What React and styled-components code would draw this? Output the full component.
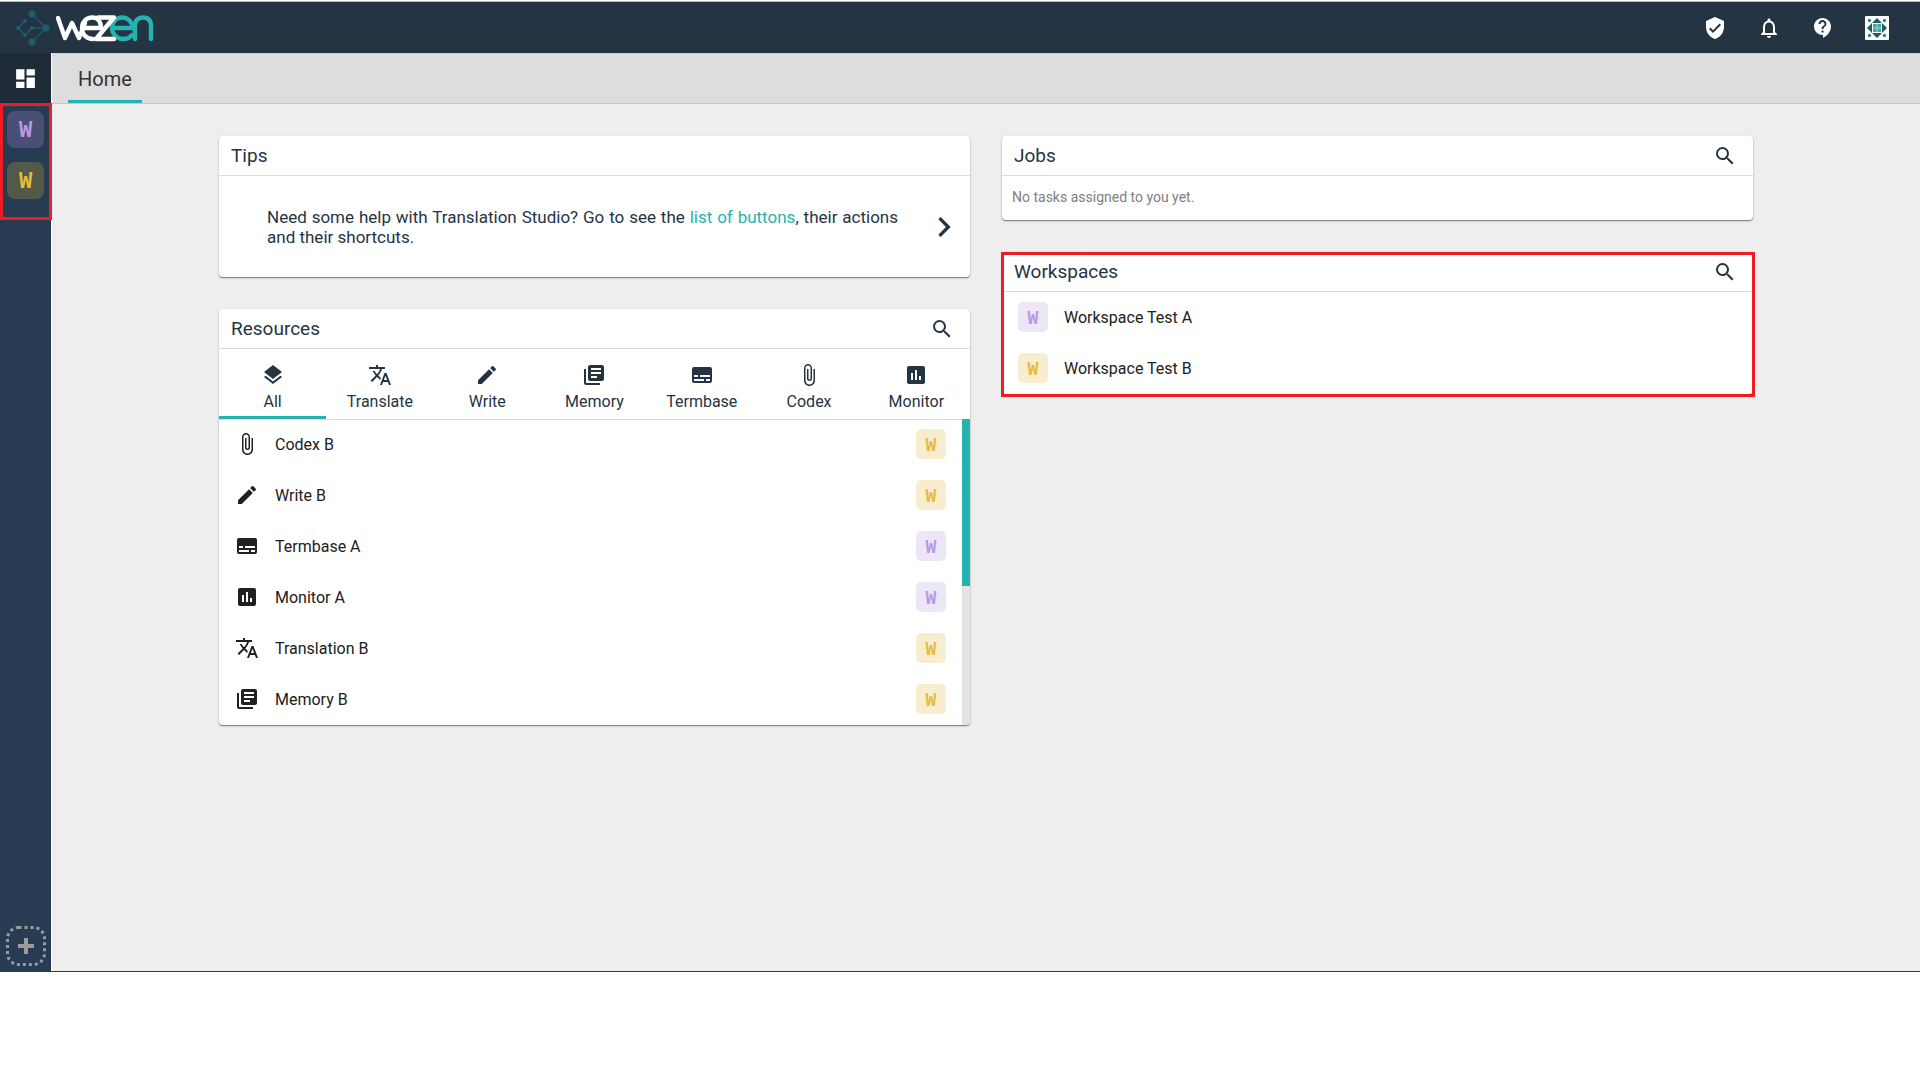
import React from 'react';
import styled, { createGlobalStyle } from 'styled-components';
import {
    MdAssessment,
    MdAttachFile,
    MdChevronRight,
    MdContactSupport,
    MdDashboard,
    MdEdit,
    MdLayers,
    MdLibraryBooks,
    MdNotificationsNone,
    MdSearch,
    MdSubtitles,
    MdTranslate,
    MdVerifiedUser
} from 'react-icons/md';

const TEAL = '#26b3b0';
const NAVY = '#253443';

const GlobalStyle = createGlobalStyle`
    * {
        box-sizing: border-box;
    }

    body {
        margin: 0;
        background: #fff;
        font-family: Roboto, 'Liberation Sans', sans-serif;
        font-size: 16px;
        color: ${NAVY};
    }

    button {
        padding: 0;
        border: 0;
        background: none;
        color: inherit;
        font: inherit;
        cursor: pointer;
    }
`;

const Page = styled.div`
    display: flex;
    flex-direction: column;
    height: 90vh;
    margin-top: 1px;
    border-top: 1px solid #b4bcc4;
    border-bottom: 1px solid #2f3f46;
`;

const Header = styled.header`
    display: flex;
    align-items: center;
    justify-content: space-between;
    height: 51px;
    flex-shrink: 0;
    padding: 0 31px 0 16px;
    background: ${NAVY};
    color: #fff;
`;

const HeaderActions = styled.div`
    display: flex;
    gap: 30px;
`;

const IconButton = styled.button`
    display: flex;
    align-items: center;
    justify-content: center;
    width: 24px;
    height: 24px;
    font-size: 24px;
`;

const Body = styled.div`
    display: flex;
    flex: 1;
    min-height: 0;
`;

const Sidebar = styled.nav`
    display: flex;
    flex-direction: column;
    justify-content: space-between;
    width: 52px;
    flex-shrink: 0;
    background: #273b52;
    border-right: 1px solid #fff;
`;

const DashboardButton = styled.button`
    display: flex;
    align-items: center;
    justify-content: center;
    width: 51px;
    height: 50px;
    background: #1f2b38;
    color: #fff;
    font-size: 25px;
`;

const WorkspaceShortcuts = styled.div`
    display: flex;
    flex-direction: column;
    gap: 14px;
    width: 52px;
    height: 117px;
    padding: 5px 4px;
    border: 3px solid #ee1c25;
`;

const Badge = styled.span`
    display: flex;
    align-items: center;
    justify-content: center;
    width: 30px;
    height: 30px;
    border-radius: 5px;
    background: ${props => (props.$tone === 'violet' ? '#ece6f7' : '#f9edcf')};
    color: ${props => (props.$tone === 'violet' ? '#b999e4' : '#e8bb38')};
    font: bold 18px 'DejaVu Sans Mono', monospace;
`;

const ShortcutBadge = styled(Badge).attrs({ as: 'button' })`
    width: 37px;
    height: 37px;
    border-radius: 8px;
    background: ${props => (props.$tone === 'violet' ? '#4a4f75' : '#535949')};
    font: bold 22px 'DejaVu Sans Mono', monospace;
`;

const AddButton = styled.button`
    display: flex;
    margin: 0 0 5px 6px;
    width: 40px;
`;

const Main = styled.main`
    flex: 1;
    min-width: 0;
    background: #eee;
`;

const TabBar = styled.div`
    display: flex;
    height: 51px;
    padding-left: 16px;
    background: #ddd;
    border-top: 1px solid #ccc;
    border-bottom: 1px solid #c8c8c8;
`;

const HomeTab = styled.button`
    padding: 4px 10px 0;
    border-bottom: 3px solid ${TEAL};
    color: #333;
    font-size: 20px;
`;

const Columns = styled.div`
    display: grid;
    grid-template-columns: 1fr 1fr;
    align-items: start;
    gap: 32px;
    padding: 32px 167px;
`;

const Column = styled.div`
    display: flex;
    flex-direction: column;
    gap: 32px;
`;

const Card = styled.section`
    border-radius: 4px;
    background: #fff;
    box-shadow: 0 1px 1px rgba(0, 0, 0, 0.4), 0 1px 3px rgba(0, 0, 0, 0.16);
    overflow: hidden;
`;

const Highlight = styled.div`
    position: relative;

    &::after {
        content: '';
        position: absolute;
        inset: 0 -2px -3px -1px;
        border: 3px solid #ee1c25;
        pointer-events: none;
    }
`;

const CardHeader = styled.div`
    display: flex;
    align-items: center;
    justify-content: space-between;
    height: 40px;
    padding: 0 16px 0 12px;
    border-bottom: 1px solid #ddd;
`;

const CardTitle = styled.h2`
    margin: 0;
    font-size: 19px;
    font-weight: 400;
`;

const TipBody = styled.div`
    display: flex;
    align-items: center;
    gap: 26px;
    height: 101px;
    padding: 0 6px 0 48px;
`;

const TipText = styled.p`
    flex: 1;
    margin: 0;
    font-size: 17px;
    line-height: 20px;
    text-align: justify;

    a {
        color: ${TEAL};
        text-decoration: none;
    }
`;

const NextButton = styled(IconButton)`
    width: 40px;
    height: 40px;
    font-size: 40px;
`;

const EmptyText = styled.p`
    margin: 0;
    padding: 11px 10px 13px;
    color: #808080;
    font-size: 14px;
    line-height: 20px;
`;

const FilterTabs = styled.div`
    display: grid;
    grid-template-columns: repeat(7, 1fr);
    height: 70px;
`;

const FilterTab = styled.button`
    display: flex;
    flex-direction: column;
    align-items: center;
    gap: 5px;
    padding-top: 14px;
    border-bottom: 3px solid ${props => (props.$active ? TEAL : 'transparent')};
    line-height: 20px;

    svg {
        font-size: 24px;
    }
`;

const ListArea = styled.div`
    display: flex;
`;

const List = styled.ul`
    flex: 1;
    margin: 0;
    padding: 0;
    list-style: none;
    box-shadow: ${props => (props.$divided ? 'inset 0 1px #ddd' : 'none')};
`;

const Row = styled.li`
    display: flex;
    align-items: center;
    gap: 16px;
    height: 51px;
    padding: 0 16px 1px;
    color: #212121;

    svg {
        font-size: 24px;
    }
`;

const RowName = styled.span`
    flex: 1;
`;

const ScrollTrack = styled.div`
    width: 8px;
    background: #e3e3e3;
`;

const ScrollThumb = styled.div`
    height: 167px;
    background: ${TEAL};
`;

const filters = [
    { label: 'All', icon: MdLayers },
    { label: 'Translate', icon: MdTranslate },
    { label: 'Write', icon: MdEdit },
    { label: 'Memory', icon: MdLibraryBooks },
    { label: 'Termbase', icon: MdSubtitles },
    { label: 'Codex', icon: MdAttachFile },
    { label: 'Monitor', icon: MdAssessment }
];

const resources = [
    { name: 'Codex B', icon: MdAttachFile, tone: 'amber' },
    { name: 'Write B', icon: MdEdit, tone: 'amber' },
    { name: 'Termbase A', icon: MdSubtitles, tone: 'violet' },
    { name: 'Monitor A', icon: MdAssessment, tone: 'violet' },
    { name: 'Translation B', icon: MdTranslate, tone: 'amber' },
    { name: 'Memory B', icon: MdLibraryBooks, tone: 'amber' }
];

const workspaces = [
    { name: 'Workspace Test A', tone: 'violet' },
    { name: 'Workspace Test B', tone: 'amber' }
];

function Logo() {
    return (
        <svg width="140" height="40" viewBox="0 2 140 40" fill="none" role="img" aria-label="wezen">
            <path stroke="#20566a" strokeWidth="1.5" d="M9 15L2 22L9 29L16 22H30L16 8M30 22L16 36" />
            <g fill="#1f5d70">
                <circle cx="16" cy="8" r="3.5" />
                <circle cx="30" cy="22" r="3.5" />
                <circle cx="16" cy="36" r="3.5" />
                <circle cx="9" cy="15" r="2" />
                <circle cx="2" cy="22" r="2" />
                <circle cx="9" cy="29" r="2" />
                <circle cx="16" cy="22" r="2" />
            </g>
            <g strokeWidth="4.4" strokeLinecap="round" strokeLinejoin="round">
                <path stroke={TEAL} d="M99 22H117C116 15 111 11.500 106.500 11.500C100 11.500 96 16 96 22C96 28 101 33 107 33C111 33 114 32 116 29" />
                <path stroke={TEAL} d="M119 33V20C119 14 122 11.500 127 11.500C132 11.500 135 14 135 20V33" />
                <path stroke="#fff" d="M42 12L49 32L56 17L63 32L69 17" />
                <path stroke="#fff" d="M69 22H85C85 15 81 11.500 76.500 11.500C70 11.500 66 16 66 22C66 29 71 33 77 33" />
                <path stroke="#fff" d="M82 11.500H98L80 33H98" />
            </g>
        </svg>
    );
}

function Avatar() {
    return (
        <svg width="24" height="24" viewBox="0 0 24 24" aria-hidden="true">
            <rect width="24" height="24" rx="1" fill="#fff" />
            <path fill="#1f5a5c" d="M12 2l5 5H7zM12 22l5-5H7zM2 12l5-5v10zM22 12l-5-5v10z" />
            <rect x="8" y="8" width="8" height="8" fill="#4aa5a6" />
            <path stroke="#9bd3d2" d="M12 8v8M8 12h8" />
            <g fill="#2f8586">
                <circle cx="4.5" cy="4.5" r="1.7" />
                <circle cx="19.5" cy="4.5" r="1.7" />
                <circle cx="4.5" cy="19.5" r="1.7" />
                <circle cx="19.5" cy="19.5" r="1.7" />
            </g>
        </svg>
    );
}

function CardTop({ title, searchable }) {
    return (
        <CardHeader>
            <CardTitle>{title}</CardTitle>
            {searchable && (
                <IconButton aria-label={`Search ${title}`}>
                    <MdSearch />
                </IconButton>
            )}
        </CardHeader>
    );
}

function Tips() {
    return (
        <Card>
            <CardTop title="Tips" />
            <TipBody>
                <TipText>
                    Need some help with Translation Studio? Go to see the <a href="#buttons">list of buttons</a>, their actions and their shortcuts.
                </TipText>
                <NextButton aria-label="Next tip">
                    <MdChevronRight />
                </NextButton>
            </TipBody>
        </Card>
    );
}

function Resources() {
    return (
        <Card>
            <CardTop title="Resources" searchable />
            <FilterTabs>
                {filters.map(({ label, icon: Icon }, index) => (
                    <FilterTab key={label} $active={index === 0}>
                        <Icon />
                        {label}
                    </FilterTab>
                ))}
            </FilterTabs>
            <ListArea>
                <List $divided>
                    {resources.map(({ name, icon: Icon, tone }) => (
                        <Row key={name}>
                            <Icon />
                            <RowName>{name}</RowName>
                            <Badge $tone={tone}>W</Badge>
                        </Row>
                    ))}
                </List>
                <ScrollTrack>
                    <ScrollThumb />
                </ScrollTrack>
            </ListArea>
        </Card>
    );
}

function Workspaces() {
    return (
        <Highlight>
            <Card>
                <CardTop title="Workspaces" searchable />
                <List>
                    {workspaces.map(({ name, tone }) => (
                        <Row key={name}>
                            <Badge $tone={tone}>W</Badge>
                            <RowName>{name}</RowName>
                        </Row>
                    ))}
                </List>
            </Card>
        </Highlight>
    );
}

export default function App() {
    return (
        <>
            <GlobalStyle />
            <Page>
                <Header>
                    <Logo />
                    <HeaderActions>
                        <IconButton aria-label="Security">
                            <MdVerifiedUser />
                        </IconButton>
                        <IconButton aria-label="Notifications">
                            <MdNotificationsNone />
                        </IconButton>
                        <IconButton aria-label="Help">
                            <MdContactSupport />
                        </IconButton>
                        <IconButton aria-label="Account">
                            <Avatar />
                        </IconButton>
                    </HeaderActions>
                </Header>
                <Body>
                    <Sidebar>
                        <div>
                            <DashboardButton aria-label="Dashboard">
                                <MdDashboard />
                            </DashboardButton>
                            <WorkspaceShortcuts>
                                {workspaces.map(({ name, tone }) => (
                                    <ShortcutBadge key={name} $tone={tone} aria-label={name}>
                                        W
                                    </ShortcutBadge>
                                ))}
                            </WorkspaceShortcuts>
                        </div>
                        <AddButton aria-label="Add workspace">
                            <svg width="40" height="40" viewBox="0 0 40 40" fill="none" stroke="#9b9b9b">
                                <rect x="1.5" y="1.5" width="37" height="37" rx="11" strokeWidth="3" strokeDasharray="3 3" />
                                <path d="M20 12v16M12 20h16" strokeWidth="4" />
                            </svg>
                        </AddButton>
                    </Sidebar>
                    <Main>
                        <TabBar>
                            <HomeTab>Home</HomeTab>
                        </TabBar>
                        <Columns>
                            <Column>
                                <Tips />
                                <Resources />
                            </Column>
                            <Column>
                                <Card>
                                    <CardTop title="Jobs" searchable />
                                    <EmptyText>No tasks assigned to you yet.</EmptyText>
                                </Card>
                                <Workspaces />
                            </Column>
                        </Columns>
                    </Main>
                </Body>
            </Page>
        </>
    );
}
